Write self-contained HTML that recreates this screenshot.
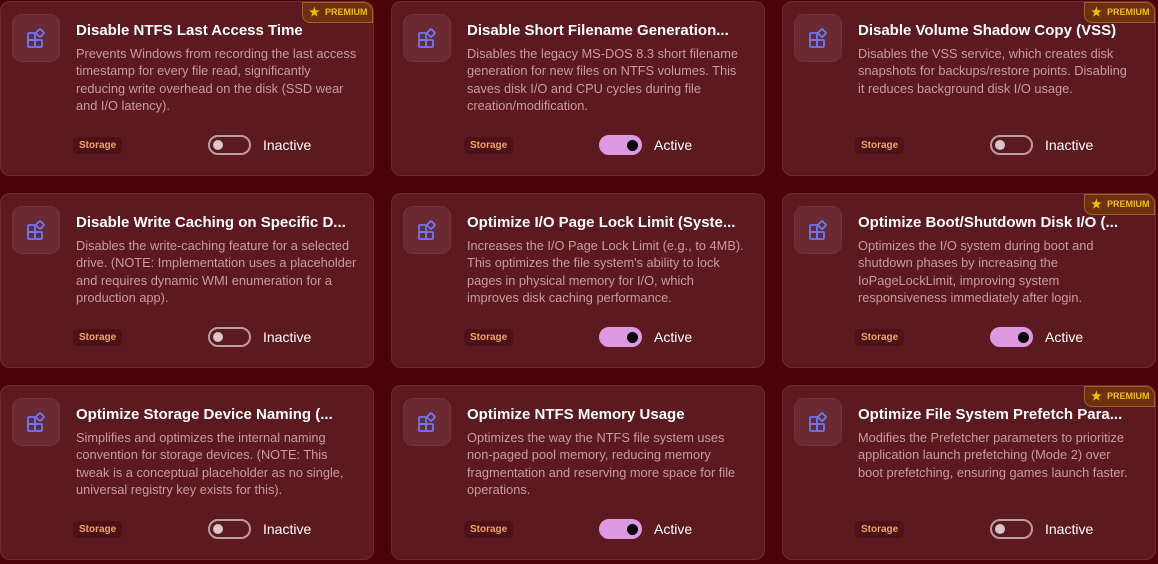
<!DOCTYPE html>
<html><head><style>
*{box-sizing:border-box;margin:0;padding:0}
body{width:1158px;height:564px;background:#4a0309;font-family:"Liberation Sans",sans-serif;position:relative;overflow:hidden}
.card{position:absolute;width:374px;height:175px;background:#5c1920;border:1px solid #6e2a31;border-radius:10px}
.ic{position:absolute;left:11px;top:12px;width:48px;height:48px;border-radius:10px;background:#6a2a31;border:1px solid #743138}
.ic svg{position:absolute;left:13px;top:13px}
.t{position:absolute;left:75px;top:20px;width:290px;font-weight:bold;font-size:15px;color:#fff;white-space:nowrap;overflow:hidden}
.d{position:absolute;left:75px;top:43px;width:295px;font-size:12.8px;line-height:17.3px;color:#c79b9f;white-space:nowrap}
.tag{position:absolute;left:72px;top:135px;height:17px;padding:0 6px;border-radius:4px;background:#4d1217;color:#f0a55a;font-size:10px;font-weight:bold;line-height:17px}
.tg{position:absolute;left:207px;top:133px;width:43px;height:20px;border-radius:10px;border:2px solid #b89ea0}
.tg::after{content:"";position:absolute;left:3px;top:3px;width:10px;height:10px;border-radius:50%;background:#d8c8c9}
.tg.on{background:#dc98e0;border-color:#dc98e0}
.tg.on::after{left:26px;top:3px;width:11px;height:11px;background:#000}
.lb{position:absolute;left:262px;top:135px;font-size:14px;color:#fff}
.pr{position:absolute;right:0;top:0;width:71px;height:21px;background:#6a3010;border:1px solid #a0621c;border-radius:0 10px 0 8px;color:#f5c000;font-size:9px;font-weight:bold;line-height:19px;padding-left:22px}
.pr::before{content:"★";position:absolute;left:6px;top:0;font-size:12px;color:#f5c000}
</style></head><body>
<div class="card" style="left:0;top:1px"><div class="ic"><svg width="22" height="22" viewBox="0 0 22 22" fill="none" stroke="#6b78ff" stroke-width="1.8"><rect x="2" y="5" width="7" height="7" rx="1"/><rect x="2" y="12" width="7" height="7" rx="1"/><rect x="9" y="12" width="7" height="7" rx="1"/><rect x="11" y="2" width="6" height="6" rx="1" transform="rotate(45 14 5)"/></svg></div><div class="pr">PREMIUM</div><div class="t">Disable NTFS Last Access Time</div><div class="d">Prevents Windows from recording the last access<br>timestamp for every file read, significantly<br>reducing write overhead on the disk (SSD wear<br>and I/O latency).</div><div class="tag">Storage</div><div class="tg"></div><div class="lb">Inactive</div></div>
<div class="card" style="left:391px;top:1px"><div class="ic"><svg width="22" height="22" viewBox="0 0 22 22" fill="none" stroke="#6b78ff" stroke-width="1.8"><rect x="2" y="5" width="7" height="7" rx="1"/><rect x="2" y="12" width="7" height="7" rx="1"/><rect x="9" y="12" width="7" height="7" rx="1"/><rect x="11" y="2" width="6" height="6" rx="1" transform="rotate(45 14 5)"/></svg></div><div class="t">Disable Short Filename Generation...</div><div class="d">Disables the legacy MS-DOS 8.3 short filename<br>generation for new files on NTFS volumes. This<br>saves disk I/O and CPU cycles during file<br>creation/modification.</div><div class="tag">Storage</div><div class="tg on"></div><div class="lb">Active</div></div>
<div class="card" style="left:782px;top:1px"><div class="ic"><svg width="22" height="22" viewBox="0 0 22 22" fill="none" stroke="#6b78ff" stroke-width="1.8"><rect x="2" y="5" width="7" height="7" rx="1"/><rect x="2" y="12" width="7" height="7" rx="1"/><rect x="9" y="12" width="7" height="7" rx="1"/><rect x="11" y="2" width="6" height="6" rx="1" transform="rotate(45 14 5)"/></svg></div><div class="pr">PREMIUM</div><div class="t">Disable Volume Shadow Copy (VSS)</div><div class="d">Disables the VSS service, which creates disk<br>snapshots for backups/restore points. Disabling<br>it reduces background disk I/O usage.</div><div class="tag">Storage</div><div class="tg"></div><div class="lb">Inactive</div></div>

<div class="card" style="left:0;top:193px"><div class="ic"><svg width="22" height="22" viewBox="0 0 22 22" fill="none" stroke="#6b78ff" stroke-width="1.8"><rect x="2" y="5" width="7" height="7" rx="1"/><rect x="2" y="12" width="7" height="7" rx="1"/><rect x="9" y="12" width="7" height="7" rx="1"/><rect x="11" y="2" width="6" height="6" rx="1" transform="rotate(45 14 5)"/></svg></div><div class="t">Disable Write Caching on Specific D...</div><div class="d">Disables the write-caching feature for a selected<br>drive. (NOTE: Implementation uses a placeholder<br>and requires dynamic WMI enumeration for a<br>production app).</div><div class="tag">Storage</div><div class="tg"></div><div class="lb">Inactive</div></div>
<div class="card" style="left:391px;top:193px"><div class="ic"><svg width="22" height="22" viewBox="0 0 22 22" fill="none" stroke="#6b78ff" stroke-width="1.8"><rect x="2" y="5" width="7" height="7" rx="1"/><rect x="2" y="12" width="7" height="7" rx="1"/><rect x="9" y="12" width="7" height="7" rx="1"/><rect x="11" y="2" width="6" height="6" rx="1" transform="rotate(45 14 5)"/></svg></div><div class="t">Optimize I/O Page Lock Limit (Syste...</div><div class="d">Increases the I/O Page Lock Limit (e.g., to 4MB).<br>This optimizes the file system's ability to lock<br>pages in physical memory for I/O, which<br>improves disk caching performance.</div><div class="tag">Storage</div><div class="tg on"></div><div class="lb">Active</div></div>
<div class="card" style="left:782px;top:193px"><div class="ic"><svg width="22" height="22" viewBox="0 0 22 22" fill="none" stroke="#6b78ff" stroke-width="1.8"><rect x="2" y="5" width="7" height="7" rx="1"/><rect x="2" y="12" width="7" height="7" rx="1"/><rect x="9" y="12" width="7" height="7" rx="1"/><rect x="11" y="2" width="6" height="6" rx="1" transform="rotate(45 14 5)"/></svg></div><div class="pr">PREMIUM</div><div class="t">Optimize Boot/Shutdown Disk I/O (...</div><div class="d">Optimizes the I/O system during boot and<br>shutdown phases by increasing the<br>IoPageLockLimit, improving system<br>responsiveness immediately after login.</div><div class="tag">Storage</div><div class="tg on"></div><div class="lb">Active</div></div>

<div class="card" style="left:0;top:385px"><div class="ic"><svg width="22" height="22" viewBox="0 0 22 22" fill="none" stroke="#6b78ff" stroke-width="1.8"><rect x="2" y="5" width="7" height="7" rx="1"/><rect x="2" y="12" width="7" height="7" rx="1"/><rect x="9" y="12" width="7" height="7" rx="1"/><rect x="11" y="2" width="6" height="6" rx="1" transform="rotate(45 14 5)"/></svg></div><div class="t">Optimize Storage Device Naming (...</div><div class="d">Simplifies and optimizes the internal naming<br>convention for storage devices. (NOTE: This<br>tweak is a conceptual placeholder as no single,<br>universal registry key exists for this).</div><div class="tag">Storage</div><div class="tg"></div><div class="lb">Inactive</div></div>
<div class="card" style="left:391px;top:385px"><div class="ic"><svg width="22" height="22" viewBox="0 0 22 22" fill="none" stroke="#6b78ff" stroke-width="1.8"><rect x="2" y="5" width="7" height="7" rx="1"/><rect x="2" y="12" width="7" height="7" rx="1"/><rect x="9" y="12" width="7" height="7" rx="1"/><rect x="11" y="2" width="6" height="6" rx="1" transform="rotate(45 14 5)"/></svg></div><div class="t">Optimize NTFS Memory Usage</div><div class="d">Optimizes the way the NTFS file system uses<br>non-paged pool memory, reducing memory<br>fragmentation and reserving more space for file<br>operations.</div><div class="tag">Storage</div><div class="tg on"></div><div class="lb">Active</div></div>
<div class="card" style="left:782px;top:385px"><div class="ic"><svg width="22" height="22" viewBox="0 0 22 22" fill="none" stroke="#6b78ff" stroke-width="1.8"><rect x="2" y="5" width="7" height="7" rx="1"/><rect x="2" y="12" width="7" height="7" rx="1"/><rect x="9" y="12" width="7" height="7" rx="1"/><rect x="11" y="2" width="6" height="6" rx="1" transform="rotate(45 14 5)"/></svg></div><div class="pr">PREMIUM</div><div class="t">Optimize File System Prefetch Para...</div><div class="d">Modifies the Prefetcher parameters to prioritize<br>application launch prefetching (Mode 2) over<br>boot prefetching, ensuring games launch faster.</div><div class="tag">Storage</div><div class="tg"></div><div class="lb">Inactive</div></div>
</body></html>
